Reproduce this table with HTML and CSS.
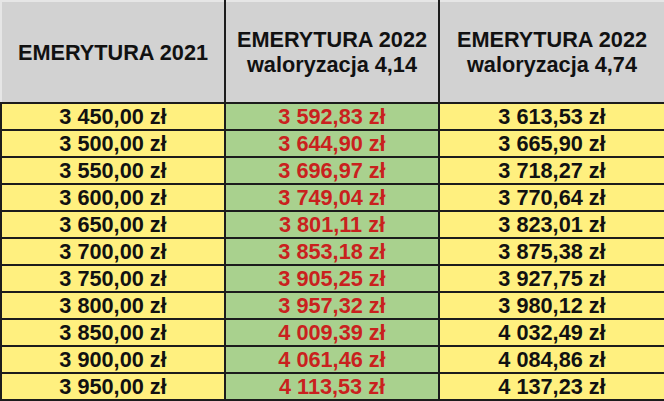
FILE: index.html
```html
<!DOCTYPE html>
<html lang="pl">
<head>
<meta charset="utf-8">
<title>Emerytura 2022</title>
<link rel="stylesheet" href="styles.css">
</head>
<body>
<table class="tbl">
  <colgroup>
    <col class="c1"><col class="c2"><col class="c3">
  </colgroup>
  <thead>
    <tr class="head">
      <th>EMERYTURA 2021</th>
      <th>EMERYTURA 2022<br>waloryzacja 4,14</th>
      <th>EMERYTURA 2022<br>waloryzacja 4,74</th>
    </tr>
  </thead>
  <tbody>
    <tr><td class="y">3 450,00 zł</td><td class="g">3 592,83 zł</td><td class="y">3 613,53 zł</td></tr>
    <tr><td class="y">3 500,00 zł</td><td class="g">3 644,90 zł</td><td class="y">3 665,90 zł</td></tr>
    <tr><td class="y">3 550,00 zł</td><td class="g">3 696,97 zł</td><td class="y">3 718,27 zł</td></tr>
    <tr><td class="y">3 600,00 zł</td><td class="g">3 749,04 zł</td><td class="y">3 770,64 zł</td></tr>
    <tr><td class="y">3 650,00 zł</td><td class="g">3 801,11 zł</td><td class="y">3 823,01 zł</td></tr>
    <tr><td class="y">3 700,00 zł</td><td class="g">3 853,18 zł</td><td class="y">3 875,38 zł</td></tr>
    <tr><td class="y">3 750,00 zł</td><td class="g">3 905,25 zł</td><td class="y">3 927,75 zł</td></tr>
    <tr><td class="y">3 800,00 zł</td><td class="g">3 957,32 zł</td><td class="y">3 980,12 zł</td></tr>
    <tr><td class="y">3 850,00 zł</td><td class="g">4 009,39 zł</td><td class="y">4 032,49 zł</td></tr>
    <tr><td class="y">3 900,00 zł</td><td class="g">4 061,46 zł</td><td class="y">4 084,86 zł</td></tr>
    <tr><td class="y">3 950,00 zł</td><td class="g">4 113,53 zł</td><td class="y">4 137,23 zł</td></tr>
  </tbody>
</table>
</body>
</html>
```

FILE: styles.css
```css
html, body {
  margin: 0;
  padding: 0;
  background: #ffffff;
}
.tbl {
  width: 664px;
  border-collapse: collapse;
  table-layout: fixed;
  font-family: "Liberation Sans", Arial, sans-serif;
  font-weight: bold;
  font-size: 21.7px;
  color: #111111;
}
.c1 { width: 224px; }
.c2 { width: 214px; }
.c3 { width: 226px; }
.tbl th, .tbl td {
  border: 2px solid #1c1c1c;
  padding: 0;
  text-align: center;
  vertical-align: middle;
}
.head th {
  background: #d2d2d2;
  height: 100px;
  line-height: 25px;
  font-weight: bold;
  border-top-color: #e6e6e6;
}
.head th:first-child { border-left-color: #e6e6e6; }
.head th:last-child { border-right-color: #e6e6e6; }
.tbl td {
  height: 25px;
  line-height: 25px;
}
.y { background: #fff07f; }
.g { background: #a9d18e; color: #c9211e; }
```
